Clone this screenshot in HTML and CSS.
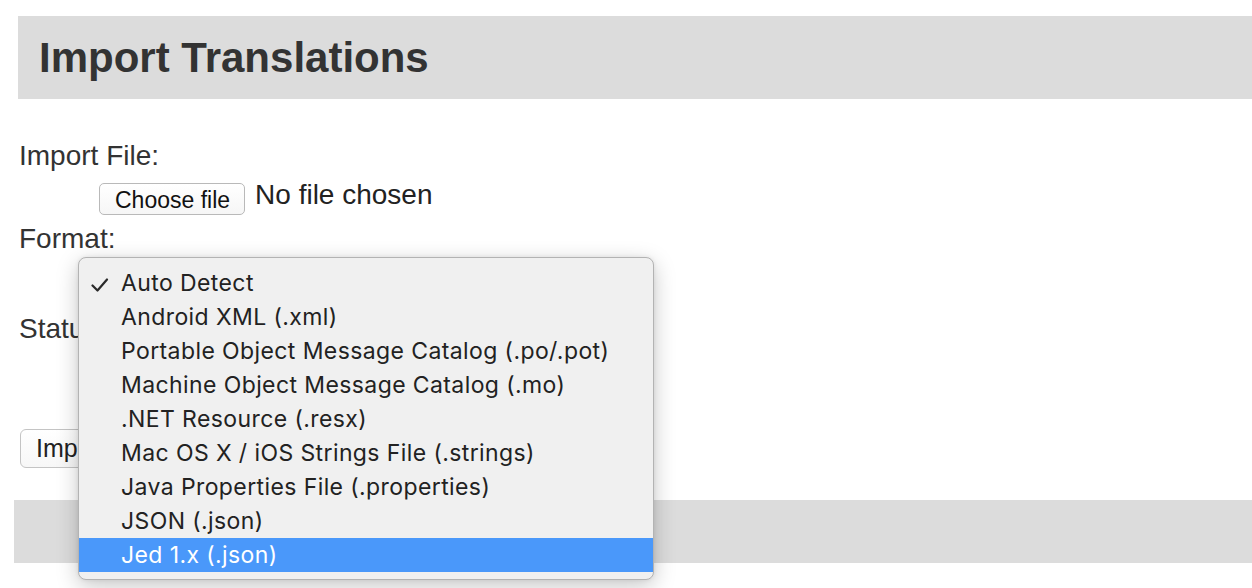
FILE: index.html
```html
<!DOCTYPE html>
<html lang="en">
<head>
<meta charset="utf-8">
<title>Import Translations</title>
<link rel="stylesheet" href="styles.css">
</head>
<body>
<header class="title-bar"><h1 class="title">Import Translations</h1></header>
<form class="form">
  <div class="label">Import File:</div>
  <div class="file-row">
    <span class="btn-file">Choose file</span>
    <span class="file-name">No file chosen</span>
  </div>
  <div class="label label-gap">Format:</div>
  <div class="select-slot"></div>
  <div class="label">Status:</div>
  <div class="select-slot2"></div>
  <span class="btn-submit">Import</span>
</form>
<div class="footer-bar"></div>

<div class="menu">
  <div class="item"><svg class="check" width="18" height="16" viewBox="0 0 18 16"><path d="M1.5 8.5 L6.5 13.5 L16 2.5" fill="none" stroke="#2a2a2a" stroke-width="2.2" stroke-linecap="round" stroke-linejoin="round"/></svg>Auto Detect</div>
  <div class="item">Android XML (.xml)</div>
  <div class="item">Portable Object Message Catalog (.po/.pot)</div>
  <div class="item">Machine Object Message Catalog (.mo)</div>
  <div class="item">.NET Resource (.resx)</div>
  <div class="item">Mac OS X / iOS Strings File (.strings)</div>
  <div class="item">Java Properties File (.properties)</div>
  <div class="item">JSON (.json)</div>
  <div class="item selected">Jed 1.x (.json)</div>
</div>
</body>
</html>
```

FILE: styles.css
```css
html, body {
  margin: 0;
  padding: 0;
  background: #ffffff;
}
body {
  font-family: "Liberation Sans", Arial, Helvetica, sans-serif;
  color: #333333;
  font-size: 28px;
  line-height: 32px;
  position: relative;
  width: 1252px;
  height: 588px;
  overflow: hidden;
}
.title-bar {
  margin: 16px 0 0 18px;
  height: 83px;
  background: #dcdcdc;
  display: flex;
  align-items: center;
  padding-left: 21px;
}
.title {
  margin: 0;
  font-size: 42px;
  line-height: 48px;
  font-weight: bold;
  color: #333333;
}
.form {
  margin-left: 19px;
  padding-top: 41px;
  display: flex;
  flex-direction: column;
  align-items: flex-start;
}
.label {
  height: 32px;
}
.file-row {
  margin-top: 11px;
  padding-left: 80px;
  display: flex;
  align-items: center;
  height: 32px;
}
.btn-file {
  box-sizing: border-box;
  height: 32px;
  padding: 3px 14px 0 15px;
  border: 1px solid #b9b9b9;
  border-radius: 5px;
  background: linear-gradient(#ffffff, #f6f6f6);
  font-size: 23px;
  line-height: 27px;
  color: #111111;
  display: flex;
  align-items: center;
}
.file-name {
  margin-left: 10px;
  color: #222222;
  margin-top: -8px;
}
.label-gap {
  margin-top: 8px;
}
.select-slot {
  height: 58px;
}
.select-slot2 {
  height: 84px;
}
.btn-submit {
  box-sizing: border-box;
  margin-left: 1px;
  height: 39px;
  padding: 0 15px;
  border: 1px solid #c4c4c4;
  border-radius: 6px;
  background: linear-gradient(#ffffff, #f7f7f7);
  font-size: 25px;
  line-height: 37px;
  color: #222222;
}
.footer-bar {
  margin: 32px 0 0 14px;
  height: 63px;
  background: #dcdcdc;
}
.menu {
  position: absolute;
  left: 78px;
  top: 257px;
  width: 576px;
  height: 323px;
  box-sizing: border-box;
  padding: 8px 0 0 0;
  background: #f0f0f0;
  border: 1px solid #b3b3b3;
  border-radius: 8px;
  box-shadow: 0 6px 22px rgba(0, 0, 0, 0.22), 0 0 4px rgba(0, 0, 0, 0.08);
  font-family: Inter, "Noto Sans", sans-serif;
  font-size: 23px;
  letter-spacing: 0.4px;
  color: #222222;
}
.item {
  position: relative;
  height: 34px;
  line-height: 34px;
  padding-left: 42px;
  white-space: nowrap;
}
.item.selected {
  background: #4a98fa;
  color: #ffffff;
}
.check {
  position: absolute;
  left: 12px;
  top: 11px;
}
```
